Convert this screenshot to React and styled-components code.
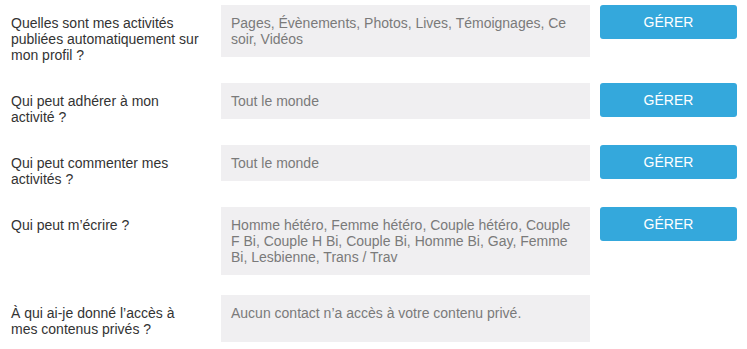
import React from 'react';
import styled, { createGlobalStyle } from 'styled-components';

const GlobalStyle = createGlobalStyle`
  body {
    margin: 0;
    background: #ffffff;
    font-family: "Liberation Sans", Arial, sans-serif;
  }
`;

const Page = styled.div`
  display: flex;
  flex-direction: column;
  gap: 20px;
  padding: 5px 10px 0 11px;
  width: 747px;
  box-sizing: border-box;
`;

const Row = styled.div`
  display: flex;
  align-items: flex-start;
`;

const Label = styled.div`
  width: 190px;
  flex: none;
  margin-right: 20px;
  padding-top: 10px;
  font-size: 14px;
  line-height: 16px;
  color: #333333;
`;

const Value = styled.div`
  width: 369px;
  flex: none;
  box-sizing: border-box;
  min-height: ${(p) => (p.$tall ? '47px' : '36px')};
  padding: 10px;
  background: #f0eff1;
  font-size: 14px;
  line-height: 16px;
  color: #7a7a7a;
`;

const Button = styled.button`
  width: 137px;
  height: 34px;
  flex: none;
  margin-left: 10px;
  border: none;
  border-radius: 3px;
  background: #34a8dc;
  color: #ffffff;
  font-family: "Liberation Sans", Arial, sans-serif;
  font-size: 14px;
  cursor: pointer;
  padding: 0;
`;

const rows = [
  {
    label: 'Quelles sont mes activités publiées automatiquement sur mon profil ?',
    value: 'Pages, Évènements, Photos, Lives, Témoignages, Ce soir, Vidéos',
    manage: true,
  },
  { label: 'Qui peut adhérer à mon activité ?', value: 'Tout le monde', manage: true },
  { label: 'Qui peut commenter mes activités ?', value: 'Tout le monde', manage: true },
  {
    label: 'Qui peut m’écrire ?',
    value:
      'Homme hétéro, Femme hétéro, Couple hétéro, Couple F Bi, Couple H Bi, Couple Bi, Homme Bi, Gay, Femme Bi, Lesbienne, Trans / Trav',
    manage: true,
  },
  {
    label: 'À qui ai-je donné l’accès à mes contenus privés ?',
    value: 'Aucun contact n’a accès à votre contenu privé.',
    manage: false,
  },
];

const App = () => (
  <>
    <GlobalStyle />
    <Page>
      {rows.map((row) => (
        <Row key={row.label}>
          <Label>{row.label}</Label>
          <Value $tall={!row.manage}>{row.value}</Value>
          {row.manage && <Button>GÉRER</Button>}
        </Row>
      ))}
    </Page>
  </>
);

export default App;
